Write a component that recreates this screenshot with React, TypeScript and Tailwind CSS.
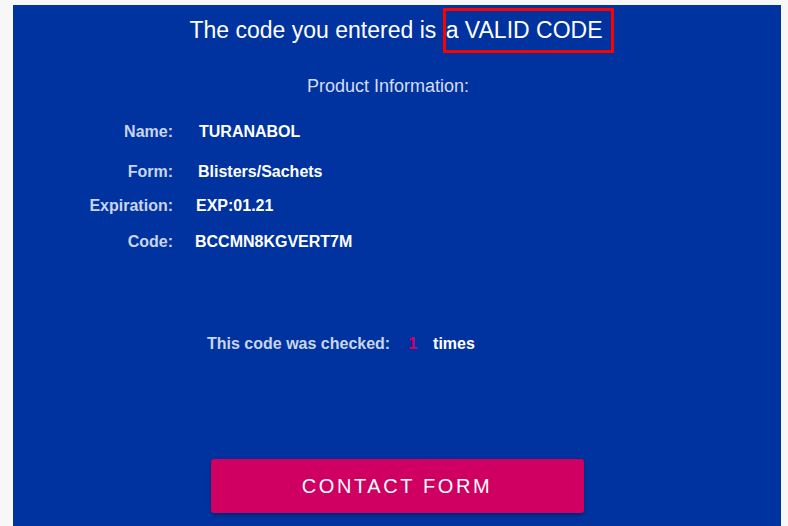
const rows = [
  { label: "Name:", value: "TURANABOL", gap: "ml-[26px]", mt: "mt-[25px]" },
  { label: "Form:", value: "Blisters/Sachets", gap: "ml-[25px]", mt: "mt-[20px]" },
  { label: "Expiration:", value: "EXP:01.21", gap: "ml-[23px]", mt: "mt-[14px]" },
  { label: "Code:", value: "BCCMN8KGVERT7M", gap: "ml-[22px]", mt: "mt-[16px]" },
];

export default function App() {
  return (
    <div className="min-h-screen bg-[#f7f7f7] pt-[5px] font-['Liberation_Sans',Arial,sans-serif]">
      <div className="ml-[13px] w-[768px] min-h-[521px] bg-[#0033a0] pt-[3px]">
        <h1 className="flex items-baseline justify-center pl-[10px] text-[23px] text-white">
          <span className="whitespace-pre">The code you entered is </span>
          <span className="border-[3px] border-[#ff0000] pr-[9px] leading-[39px]">a VALID CODE</span>
        </h1>

        <p className="mt-[23px] text-center text-[18px] leading-[21px] text-[#d3ddf0] pr-[18px]">
          Product Information:
        </p>

        <div>
          {rows.map((r) => (
            <div key={r.label} className={`flex h-[20px] items-center text-[16px] font-bold ${r.mt}`}>
              <span className="w-[160px] text-right text-[#c9d5ea]">{r.label}</span>
              <span className={`text-white ${r.gap}`}>{r.value}</span>
            </div>
          ))}
        </div>

        <div className="ml-[194px] mt-[82px] flex h-[20px] items-center text-[16px] font-bold">
          <span className="text-[#c9d5ea]">This code was checked:</span>
          <span className="ml-[18px] text-[#d0006a]">1</span>
          <span className="ml-[16px] text-white">times</span>
        </div>

        <div className="mt-[105px] flex justify-center">
          <button className="h-[54px] w-[373px] rounded-[3px] bg-[#cf0062] text-[20px] tracking-[2.6px] text-white shadow-[0_2px_4px_rgba(0,0,0,0.3)]">
            CONTACT FORM
          </button>
        </div>
      </div>
    </div>
  );
}
